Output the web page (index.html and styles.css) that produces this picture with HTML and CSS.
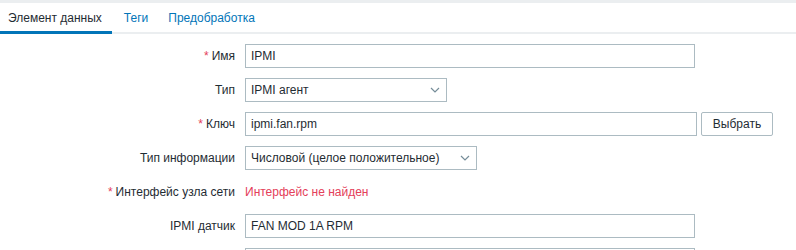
FILE: index.html
```html
<!DOCTYPE html>
<html lang="ru">
<head>
    <meta charset="UTF-8">
    <meta name="viewport" content="width=device-width, initial-scale=1.0">
    <title>Элемент данных</title>
    <link rel="stylesheet" href="styles.css">
</head>
<body>
    <div class="page">
        <ul class="tabs">
            <li class="tab active">Элемент данных</li>
            <li class="tab">Теги</li>
            <li class="tab">Предобработка</li>
        </ul>
        <div class="form">
            <label class="label"><span class="req">*</span> Имя</label>
            <div class="field"><input class="input w-wide" type="text" value="IPMI"></div>

            <label class="label">Тип</label>
            <div class="field">
                <div class="select w-type">
                    <span>IPMI агент</span>
                    <svg class="chevron" width="10" height="6" viewBox="0 0 10 6"><path d="M1 1l4 4 4-4" fill="none" stroke="#768d99" stroke-width="1.2"/></svg>
                </div>
            </div>

            <label class="label"><span class="req">*</span> Ключ</label>
            <div class="field">
                <input class="input w-key" type="text" value="ipmi.fan.rpm">
                <button class="btn" type="button">Выбрать</button>
            </div>

            <label class="label">Тип информации</label>
            <div class="field">
                <div class="select w-info">
                    <span>Числовой (целое положительное)</span>
                    <svg class="chevron" width="10" height="6" viewBox="0 0 10 6"><path d="M1 1l4 4 4-4" fill="none" stroke="#768d99" stroke-width="1.2"/></svg>
                </div>
            </div>

            <label class="label"><span class="req">*</span> Интерфейс узла сети</label>
            <div class="field"><span class="error">Интерфейс не найден</span></div>

            <label class="label">IPMI датчик</label>
            <div class="field"><input class="input w-wide" type="text" value="FAN MOD 1A RPM"></div>

            <label class="label"></label>
            <div class="field"><input class="input w-wide" type="text" value=""></div>
        </div>
    </div>
</body>
</html>
```

FILE: styles.css
```css
body {
    margin: 0;
    background-color: #ffffff;
    color: #1f2c33;
    font-family: "Liberation Sans", Arial, sans-serif;
    font-size: 12px;
}
.page {
    border-top: 3px solid #ebeef0;
}
.tabs {
    display: flex;
    margin: 0;
    padding: 0;
    list-style: none;
    border-bottom: 2px solid #ebeef0;
    height: 29px;
}
.tab {
    padding: 0 8px;
    margin-right: 4px;
    line-height: 30px;
    color: #0275b8;
    border-bottom: 3px solid transparent;
    margin-bottom: -2px;
}
.tab.active {
    color: #1f2c33;
    border-bottom-color: #0275b8;
    padding-right: 10px;
}
.form {
    display: grid;
    grid-template-columns: 235px 1fr;
    column-gap: 10px;
    row-gap: 10px;
    grid-auto-rows: 24px;
    padding-top: 10px;
}
.label {
    display: flex;
    align-items: center;
    justify-content: flex-end;
}
.req {
    color: #e4405a;
    margin-right: 3px;
}
.field {
    display: flex;
    align-items: center;
    gap: 4px;
}
.input {
    box-sizing: border-box;
    height: 24px;
    border: 1px solid #acbbc2;
    padding: 0 5px;
    font-family: inherit;
    font-size: 12px;
    color: #1f2c33;
    background: #ffffff;
    outline: none;
}
.w-wide {
    width: 450px;
}
.w-key {
    width: 452px;
}
.select {
    box-sizing: border-box;
    height: 24px;
    border: 1px solid #acbbc2;
    padding: 0 5px;
    display: flex;
    align-items: center;
    justify-content: space-between;
    background: #ffffff;
}
.w-type {
    width: 202px;
}
.w-info {
    width: 232px;
}
.chevron {
    margin-right: 1px;
}
.btn {
    box-sizing: border-box;
    height: 24px;
    width: 72px;
    border: 1px solid #acbbc2;
    border-radius: 2px;
    background: #ffffff;
    color: #1f2c33;
    font-family: inherit;
    font-size: 12px;
    padding: 0;
}
.error {
    color: #e4405a;
}
```
